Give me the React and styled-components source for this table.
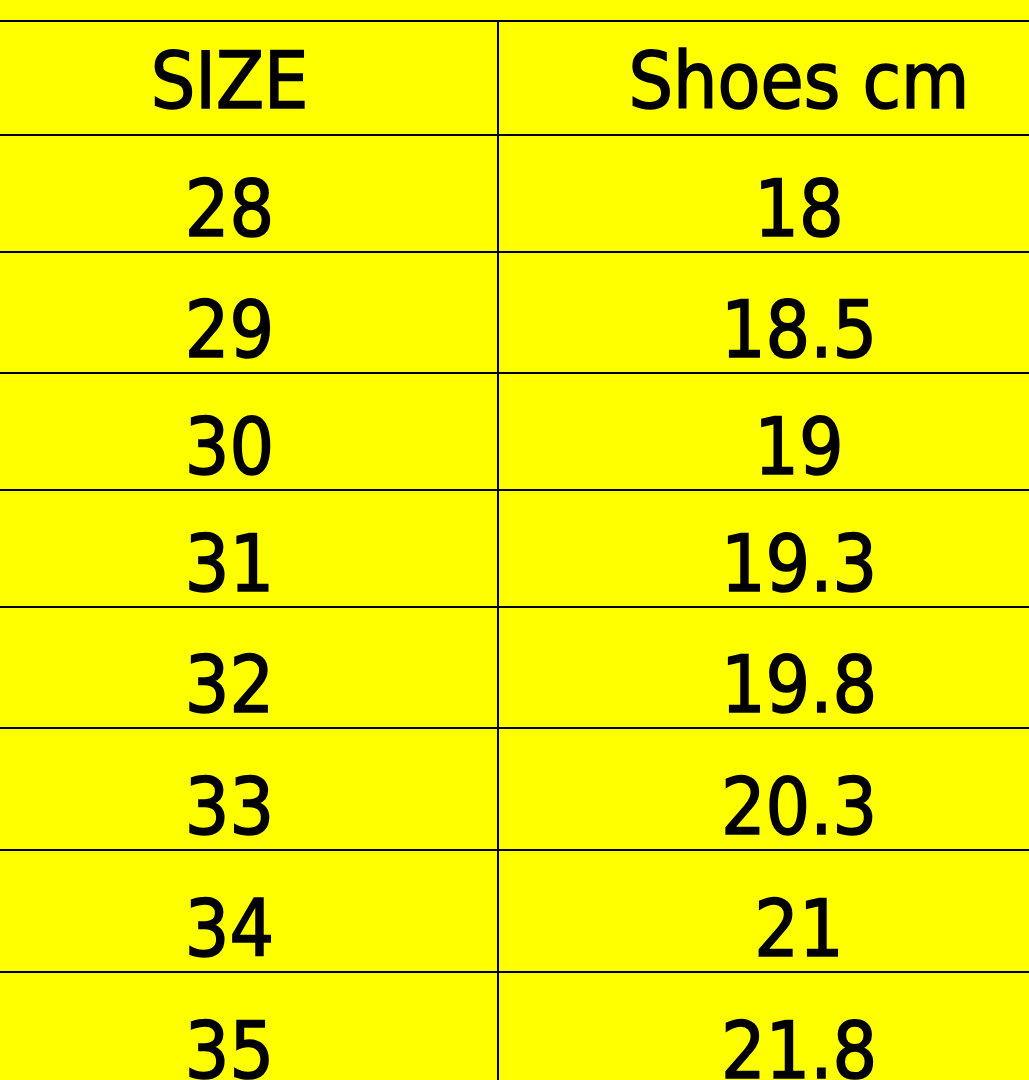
import React from "react";
import styled, { createGlobalStyle } from "styled-components";

const sizes = [
  { size: "28", cm: "18", height: 117 },
  { size: "29", cm: "18.5", height: 121 },
  { size: "30", cm: "19", height: 117 },
  { size: "31", cm: "19.3", height: 117 },
  { size: "32", cm: "19.8", height: 121 },
  { size: "33", cm: "20.3", height: 122 },
  { size: "34", cm: "21", height: 122 },
  { size: "35", cm: "21.8", height: 122 },
];

const GlobalStyle = createGlobalStyle`
  html, body {
    margin: 0;
    padding: 0;
    background: #ffff00;
  }
  * {
    box-sizing: border-box;
  }
`;

const App = () => {
  return (
    <>
      <GlobalStyle />
      <Page>
        <Sheet>
          <Row $height={114}>
            <SizeCell $head>SIZE</SizeCell>
            <CmCell $head>Shoes cm</CmCell>
          </Row>
          {sizes.map((item) => (
            <Row key={item.size} $height={item.height}>
              <SizeCell>{item.size}</SizeCell>
              <CmCell>{item.cm}</CmCell>
            </Row>
          ))}
        </Sheet>
      </Page>
    </>
  );
};

const Page = styled.div`
  height: 1080px;
  overflow: hidden;
  padding-top: 20px;
  background-color: #ffff00;
`;

const Sheet = styled.div`
  display: flex;
  flex-direction: column;
  border-top: 2px solid #000;
`;

const Row = styled.div`
  display: grid;
  grid-template-columns: 499px 1fr;
  height: ${(p) => p.$height}px;
  flex-shrink: 0;
  border-bottom: 2px solid #000;
`;

const Cell = styled.div`
  display: flex;
  justify-content: center;
  align-items: ${(p) => (p.$head ? "center" : "flex-end")};
  padding-top: ${(p) => (p.$head ? "6px" : "0")};
  padding-bottom: ${(p) => (p.$head ? "0" : "3px")};
  font-family: "DejaVu Sans Condensed", "DejaVu Sans", sans-serif;
  font-stretch: condensed;
  font-size: 78px;
  line-height: 1;
  color: #000;
  -webkit-text-stroke: 1.6px #000;
  white-space: nowrap;
`;

const SizeCell = styled(Cell)`
  border-right: 2px solid #000;
  padding-right: 38px;
`;

const CmCell = styled(Cell)`
  padding-left: 70px;
`;

export default App;
